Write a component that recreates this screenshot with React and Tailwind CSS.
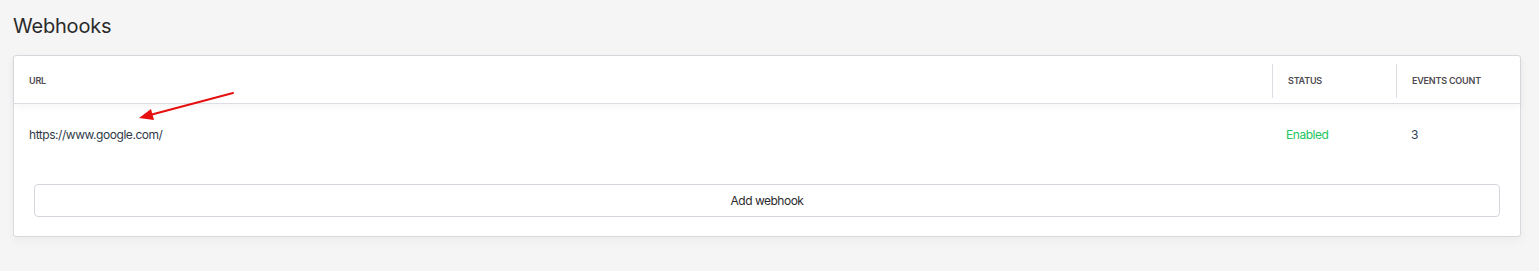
export default function App() {
  return (
    <div
      className="relative min-h-[271px] w-full bg-[#f5f5f5] pt-[14px]"
      style={{ fontFamily: "Inter, 'Noto Sans', sans-serif" }}
    >
      <h1 className="ml-[13px] text-[20px] leading-[24px] tracking-[-0.2px] text-[#2b2b2b]">Webhooks</h1>

      <div className="ml-[13px] mt-[17px] w-[1508px] rounded-[3px] border border-[#d8d8df] bg-white shadow-[0_4px_10px_rgba(0,0,0,0.04)]">
        {/* Header */}
        <div className="flex h-[48px] items-center border-b border-[#dcdce3] pt-[2px] shadow-[0_3px_8px_rgba(0,0,0,0.04)]">
          <div className="flex-1 pl-[15px] text-[9px] font-semibold uppercase tracking-[-0.2px] text-[#4d4a4f]">URL</div>
          <div className="flex h-[34px] w-[124px] items-center border-l border-[#dcdce3] pl-[15px] text-[9px] font-semibold uppercase tracking-[-0.2px] text-[#4d4a4f]">
            Status
          </div>
          <div className="flex h-[34px] w-[124px] items-center border-l border-[#dcdce3] pl-[15px] text-[9px] font-semibold uppercase tracking-[-0.2px] text-[#4d4a4f]">
            Events count
          </div>
        </div>

        {/* Row */}
        <div className="flex h-[61px] items-center pt-[1px] text-[12px] tracking-[-0.45px]">
          <div className="flex-1 pl-[15px] text-[#2f3a48]">https://www.google.com/</div>
          <div className="w-[124px] pl-[14px] text-[#22c55e]">Enabled</div>
          <div className="w-[124px] pl-[15px] text-[#2c3e55]">3</div>
        </div>

        <div className="px-[20px] pt-[19px] pb-[19px]">
          <button className="flex h-[33px] w-full items-center justify-center rounded-[4px] border border-[#d6d6de] bg-white text-[12px] tracking-[-0.5px] text-[#2b2b2b]">
            Add webhook
          </button>
        </div>
      </div>

      {/* Annotation arrow */}
      <svg className="pointer-events-none absolute left-0 top-0" width="260" height="140">
        <line x1="233" y1="93" x2="150" y2="115" stroke="#e5100f" strokeWidth="2" strokeLinecap="round" />
        <polygon points="139,118 151,109 154,120" fill="#e5100f" />
      </svg>
    </div>
  );
}
